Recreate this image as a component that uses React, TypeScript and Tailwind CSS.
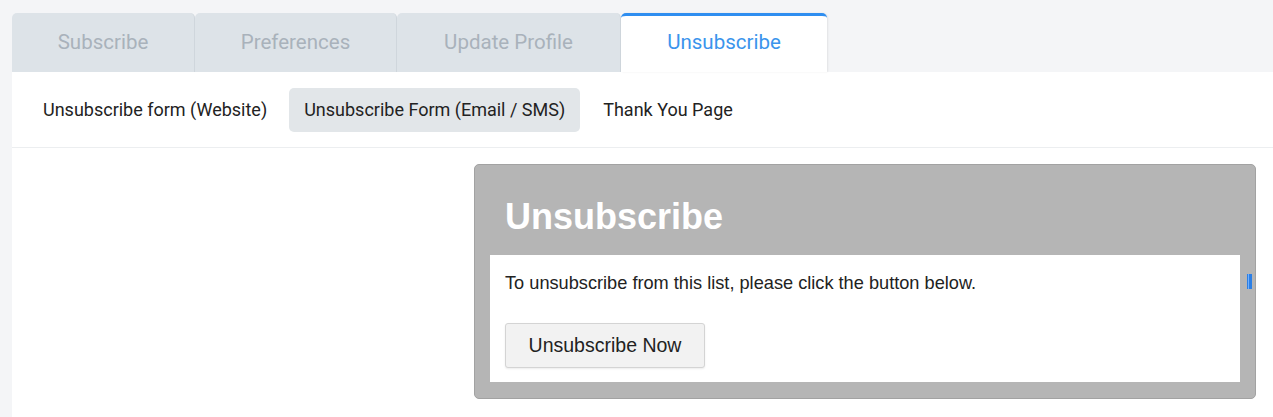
const tabs = [
  { label: 'Subscribe', w: 'w-[183px]' },
  { label: 'Preferences', w: 'w-[202px]' },
  { label: 'Update Profile', w: 'w-[224px]' },
];

const subTabs = ['Unsubscribe form (Website)', 'Unsubscribe Form (Email / SMS)', 'Thank You Page'];

export default function App() {
  return (
    <div className="h-[417px] w-full overflow-hidden bg-[#f4f5f7] pl-3 pt-[13px] font-['Roboto',sans-serif]">
      {/* top tabs */}
      <div className="flex h-[59px] items-stretch">
        {tabs.map((t) => (
          <div
            key={t.label}
            className={`${t.w} flex items-center justify-center rounded-t-[5px] border-r border-[#cfd6dc] bg-[#dde3e8] text-[20.5px] text-[#a9b2bb]`}
          >
            {t.label}
          </div>
        ))}
        <div className="flex w-[206px] items-center justify-center rounded-t-[5px] border-t-[3px] border-[#2f8ef0] bg-white pb-[3px] text-[20.5px] text-[#3a94ec] shadow-[1px_0_2px_rgba(0,0,0,0.08)]">
          Unsubscribe
        </div>
      </div>

      {/* panel */}
      <div className="h-full bg-white">
        <div className="flex h-[76px] items-center gap-[6px] border-b border-[#eceef0] pl-[15px]">
          {subTabs.map((s, i) => (
            <div
              key={s}
              className={`flex h-[44px] items-center rounded-[5px] text-[18px] text-[#222] ${
                i === 1 ? 'bg-[#e2e6e9] px-[15px]' : i === 2 ? 'pl-[17px] pr-4' : 'px-4'
              }`}
            >
              {s}
            </div>
          ))}
        </div>

        <div className="relative ml-[462px] mt-4 w-[782px] rounded-[5px] border border-[#a2a2a2] bg-[#b5b5b5] px-[15px] pb-4 font-['Liberation_Sans',Arial,sans-serif]">
          <div className="flex h-[90px] items-center pl-[15px] pt-[14px] text-[36px] font-bold text-white">
            Unsubscribe
          </div>
          <div className="h-[127px] bg-white px-[15px] pt-[17px]">
            <p className="text-[18.2px] leading-[22px] text-[#222]">
              To unsubscribe from this list, please click the button below.
            </p>
            <button className="mt-[29px] h-[45px] w-[200px] rounded-[3px] border border-[#d4d4d4] bg-[#f2f2f2] text-[19.5px] text-[#222] shadow-[0_1px_2px_rgba(0,0,0,0.08)]">
              Unsubscribe Now
            </button>
          </div>
          <div className="absolute right-[3px] top-[109px] flex h-[15px] w-[5px] gap-px bg-[#2c7fe6] px-px">
            <span className="w-px bg-[#6fb0ff]" />
          </div>
        </div>
      </div>
    </div>
  );
}
